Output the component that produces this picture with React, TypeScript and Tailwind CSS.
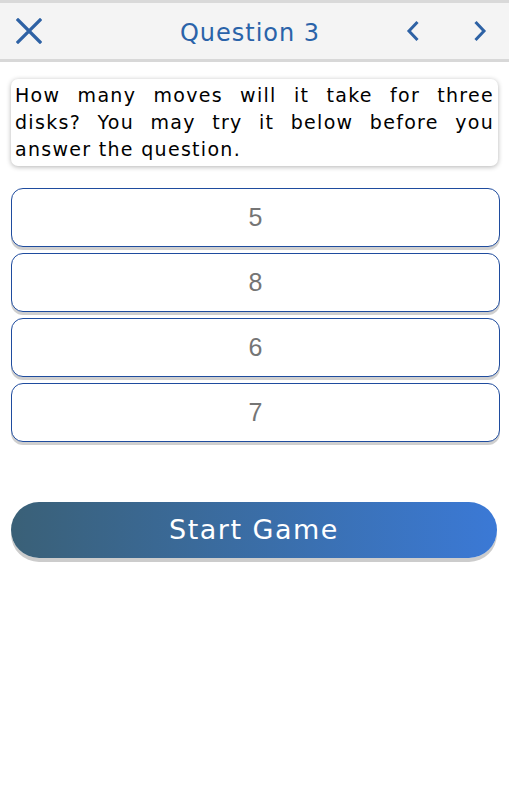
import React from "react";

const font = { fontFamily: '"DejaVu Sans", "Open Sans", sans-serif' };

function Option({ label }: { label: string }) {
  return (
    <div className="h-[59px] rounded-[12px] border border-[#1f4c9e] bg-white shadow-[0_3px_0_#cfcfcf] flex items-center justify-center">
      <span className="text-[25px] text-[#757575]" style={{ fontFamily: '"Liberation Sans", Arial, sans-serif' }}>
        {label}
      </span>
    </div>
  );
}

export default function App() {
  return (
    <div className="w-[509px] h-[800px] bg-white" style={font}>
      <div className="h-[3px] bg-[#d9d9d9]" />
      <div className="h-[59px] bg-[#f4f4f4] border-b-[3px] border-[#d8d8d8] flex items-center px-[16px]">
        <svg width="26" height="26" viewBox="0 0 26 26" className="shrink-0">
          <path d="M2 2 L24 24 M24 2 L2 24" stroke="#2e62a5" strokeWidth="3.2" strokeLinecap="square" fill="none" />
        </svg>
        <div className="flex-1 text-center text-[24px] tracking-[1px] text-[#2a63a9] pl-[52px] pt-[3px]">Question 3</div>
        <svg width="14" height="22" viewBox="0 0 14 22" className="shrink-0 mr-[53px]">
          <path d="M11.5 2 L3 11 L11.5 20" stroke="#2e62a5" strokeWidth="3" fill="none" strokeLinejoin="miter" />
        </svg>
        <svg width="14" height="22" viewBox="0 0 14 22" className="shrink-0 mr-[6px]">
          <path d="M2.5 2 L11 11 L2.5 20" stroke="#2e62a5" strokeWidth="3" fill="none" strokeLinejoin="miter" />
        </svg>
      </div>
      <div className="mt-[17px] ml-[11px] w-[487px] rounded-[7px] bg-white shadow-[0_1px_5px_rgba(0,0,0,0.3)] px-[4px] py-[3px]">
        <p className="text-[19px] leading-[27px] text-black text-justify tracking-[1.3px]">
          How many moves will it take for three disks? You may try it below before you answer the question.
        </p>
      </div>
      <div className="mt-[22px] ml-[11px] w-[489px] flex flex-col gap-[6px]">
        <Option label="5" />
        <Option label="8" />
        <Option label="6" />
        <Option label="7" />
      </div>
      <div className="mt-[60px] ml-[11px] w-[486px] h-[56px] rounded-full bg-gradient-to-r from-[#3a6077] to-[#3b79d6] shadow-[0_4px_0_#cccccc] flex items-center justify-center">
        <span className="text-[27px] text-white tracking-[1.5px]">Start Game</span>
      </div>
    </div>
  );
}
